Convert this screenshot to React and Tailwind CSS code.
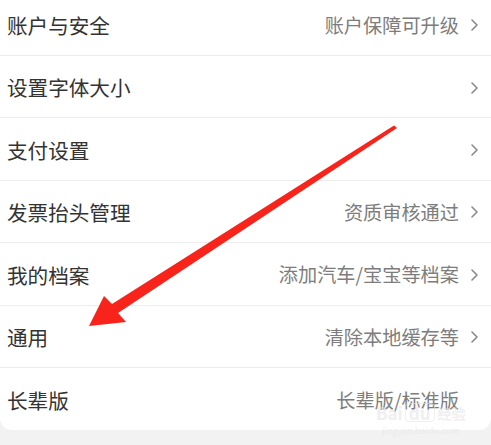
import React from "react";

const rows = [
  { label: "账户与安全", value: "账户保障可升级", chevron: true },
  { label: "设置字体大小", value: "", chevron: true },
  { label: "支付设置", value: "", chevron: true },
  { label: "发票抬头管理", value: "资质审核通过", chevron: true },
  { label: "我的档案", value: "添加汽车/宝宝等档案", chevron: true },
  { label: "通用", value: "清除本地缓存等", chevron: true },
  { label: "长辈版", value: "长辈版/标准版", chevron: false },
];

function Chevron() {
  return (
    <svg width="9" height="14" viewBox="0 0 9 14" className="ml-[11px] shrink-0">
      <path d="M2 2 L7 7 L2 12" fill="none" stroke="#8a8a8a" strokeWidth="1.6" strokeLinecap="round" strokeLinejoin="round" />
    </svg>
  );
}

export default function App() {
  return (
    <div
      className="relative w-[491px] h-[445px] overflow-hidden bg-[#f2f2f2]"
      style={{ fontFamily: '"Noto Sans CJK SC", "Noto Sans", sans-serif' }}
    >
      <div className="-mt-[6.4px] bg-white rounded-b-[12px] overflow-hidden">
        {rows.map((r, i) => (
          <div
            key={i}
            className={`flex items-center h-[62.4px] pl-[7px] pr-[12px] pt-[2px] ${i < rows.length - 1 ? "border-b border-[#ededed]" : ""}`}
          >
            <span className="text-[20.6px] text-[#333333] leading-none">{r.label}</span>
            <div className="flex-1" />
            {r.value && (
              <span className={`text-[19.2px] text-[#7d7d7d] leading-none ${r.chevron ? "" : "mr-[20px]"}`}>{r.value}</span>
            )}
            {r.chevron && <Chevron />}
          </div>
        ))}
      </div>

      {/* red arrow annotation */}
      <svg className="absolute left-0 top-0 pointer-events-none" width="491" height="445" viewBox="0 0 491 445">
        <polygon
          points="89,326 104,296 112,304 394,125.5 397,128 118,313 126,322"
          fill="#f8231a"
        />
      </svg>

      {/* faint watermark */}
      <div className="absolute left-[376px] top-[403px] flex flex-col items-center opacity-60 pointer-events-none">
        <div className="flex items-center text-[17px] font-bold leading-none text-[#e6e6e6]">
          <span>Bai</span>
          <span className="ml-[2px] px-[3px] rounded-[4px] border border-[#e6e6e6]">du</span>
          <span className="ml-[3px] text-[14px]">经验</span>
        </div>
        <span className="mt-[4px] text-[9px] leading-none text-[#e6e6e6]">jingyan.baidu.com</span>
      </div>
    </div>
  );
}
